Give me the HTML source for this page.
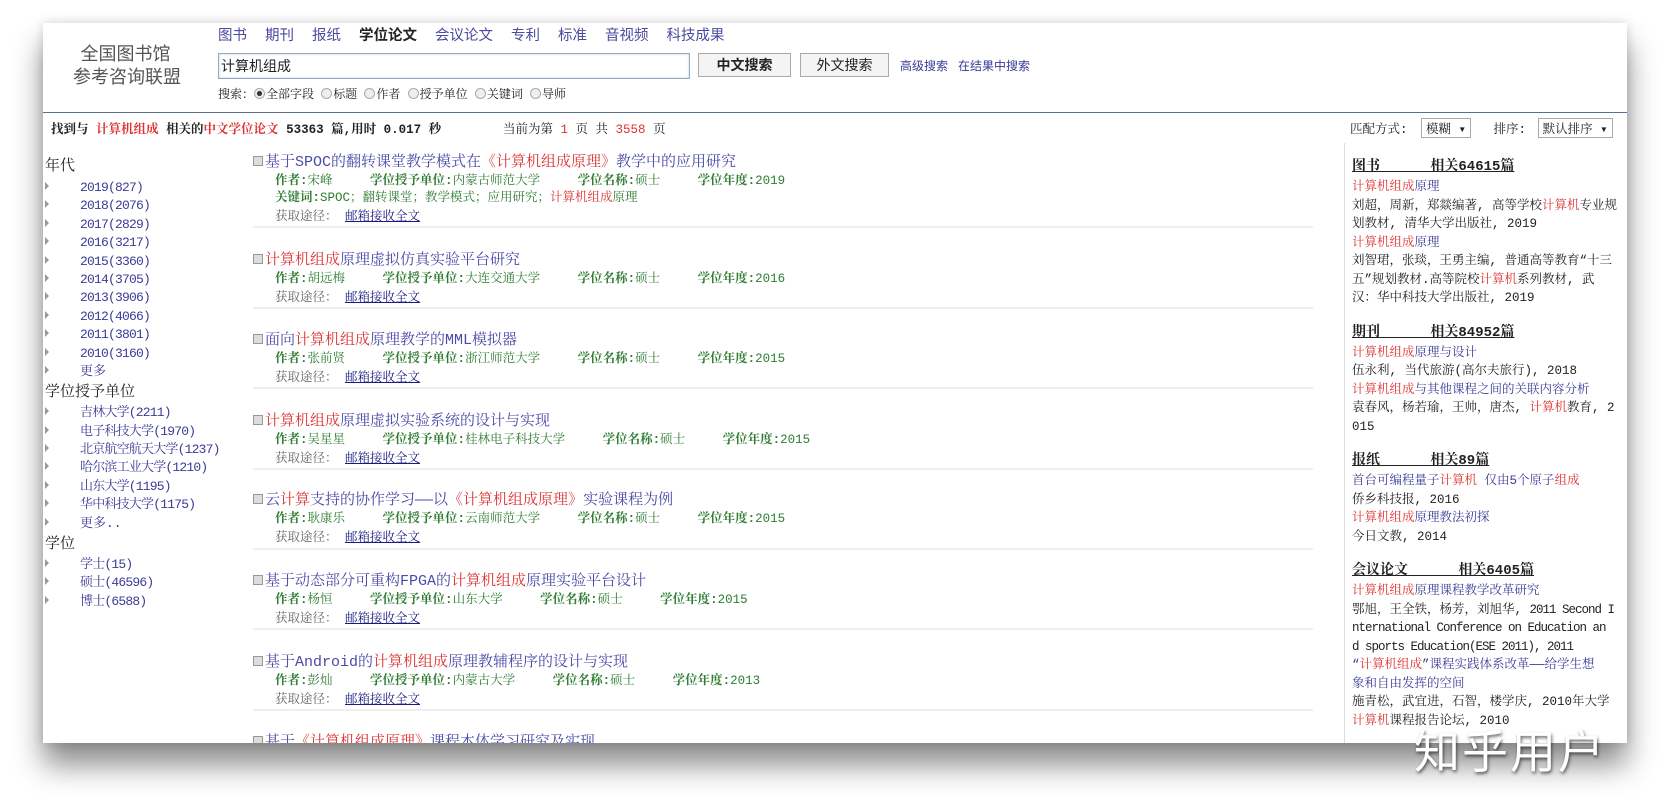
<!DOCTYPE html>
<html><head><meta charset="utf-8">
<style>
*{margin:0;padding:0;box-sizing:border-box}
body{width:1670px;height:803px;background:#fff;position:relative;overflow:hidden;font-family:"Liberation Mono","Noto Serif CJK SC","Noto Sans CJK SC",monospace;font-size:13px;color:#222}
.page{position:absolute;left:43px;top:23px;width:1584px;height:720px;background:#fff;box-shadow:0 22px 28px rgba(0,0,0,.45),0 0 10px rgba(0,0,0,.15);overflow:hidden}
.a{position:absolute;white-space:nowrap}
.sans{font-family:"Liberation Sans","Noto Sans CJK SC",sans-serif}
.r{color:#d33}
.b{color:#3b3b98}
.g{color:#2e7d32}
.gl{color:#2e7d32;font-weight:bold}
.nav span{margin-right:18px;color:#4a4aa0}
.lnk{color:#1a1a80;text-decoration:underline}
.tri{display:inline-block;width:0;height:0;border-left:4px solid #999;border-top:4px solid transparent;border-bottom:4px solid transparent;margin-right:31px;vertical-align:1px}
.lc div{height:18.4px;line-height:18.4px;color:#3b3b98}
.lc .n{letter-spacing:-0.8px}
.cb{display:inline-block;width:10px;height:10px;border:1px solid #999;background:#ddd;margin-right:2px;vertical-align:0}
.res{position:absolute;left:210px;white-space:nowrap}
.res .t{font-size:15px;line-height:19px;color:#4a4aa8}
.res .m{padding-left:22px;line-height:19px;font-size:12.5px}
.sep{position:absolute;left:210px;width:1060px;height:2px;background:#eee}
.rc div{height:18.5px;line-height:18.5px;white-space:nowrap}
.rc .l{letter-spacing:-1px}
.rh{font-weight:bold;text-decoration:underline;font-size:14px;color:#222}
.rad{display:inline-block;width:11px;height:11px;border-radius:50%;border:1px solid #aaa;background:#eee;vertical-align:-1px;margin-right:1px}
</style></head><body>
<div class="page">
<div class="a sans" style="left:30px;top:20px;width:105px;text-align:center;font-size:18px;line-height:23px;color:#555">全国图书馆<br>参考咨询联盟</div>
<div class="a sans nav" style="left:175px;top:1px;font-size:14.5px"><span>图书</span><span>期刊</span><span>报纸</span><span style="color:#222;font-weight:bold">学位论文</span><span>会议论文</span><span>专利</span><span>标准</span><span>音视频</span><span>科技成果</span></div>
<div class="a sans" style="left:175px;top:30px;width:472px;height:26px;border:1px solid #9ab;box-shadow:inset 0 0 2px #bcd;font-size:14px;line-height:24px;padding-left:2px">计算机组成</div>
<div class="a sans" style="left:655px;top:30px;width:93px;height:24px;border:1px solid #aaa;background:#f4f4f4;font-weight:bold;font-size:14px;text-align:center;line-height:22px">中文搜索</div>
<div class="a sans" style="left:757px;top:30px;width:89px;height:24px;border:1px solid #aaa;background:#f4f4f4;font-size:14px;text-align:center;line-height:22px">外文搜索</div>
<div class="a sans" style="left:857px;top:34px;font-size:12px;color:#3b3b98">高级搜索&nbsp;&nbsp;&nbsp;在结果中搜索</div>
<div class="a" style="left:175px;top:62px;font-size:12px">搜索：<span class="rad" style="background:radial-gradient(#333 35%,#eee 45%)"></span>全部字段 <span class="rad"></span>标题 <span class="rad"></span>作者 <span class="rad"></span>授予单位 <span class="rad"></span>关键词 <span class="rad"></span>导师</div>
<div class="a" style="left:0;top:89px;width:1584px;height:1px;background:#5a7090"></div>
<div class="a" style="left:8px;top:96px;font-weight:bold;font-size:12.5px">找到与 <span class="r">计算机组成</span> 相关的<span class="r">中文学位论文</span> 53363 篇,用时 0.017 秒</div>
<div class="a" style="left:460px;top:96px;font-size:12.5px">当前为第 <span class="r">1</span> 页 共 <span class="r">3558</span> 页</div>
<div class="a" style="left:1307px;top:95px;font-size:12.5px">匹配方式: <span style="display:inline-block;border:1px solid #aaa;padding:0 4px;margin-left:6px">模糊 ▾</span>&nbsp;&nbsp; 排序: <span style="display:inline-block;border:1px solid #aaa;padding:0 4px;margin-left:4px">默认排序 ▾</span></div>

<div class="a lc" style="left:2px;top:135px">
<div style="font-size:15px;color:#222;height:21px">年代</div>
<div class="n"><span class="tri"></span>2019(827)</div><div class="n"><span class="tri"></span>2018(2076)</div><div class="n"><span class="tri"></span>2017(2829)</div><div class="n"><span class="tri"></span>2016(3217)</div><div class="n"><span class="tri"></span>2015(3360)</div><div class="n"><span class="tri"></span>2014(3705)</div><div class="n"><span class="tri"></span>2013(3906)</div><div class="n"><span class="tri"></span>2012(4066)</div><div class="n"><span class="tri"></span>2011(3801)</div><div class="n"><span class="tri"></span>2010(3160)</div><div><span class="tri"></span>更多</div>
<div style="font-size:15px;color:#222;height:23px;line-height:23px">学位授予单位</div>
<div class="n"><span class="tri"></span>吉林大学(2211)</div><div class="n"><span class="tri"></span>电子科技大学(1970)</div><div class="n"><span class="tri"></span>北京航空航天大学(1237)</div><div class="n"><span class="tri"></span>哈尔滨工业大学(1210)</div><div class="n"><span class="tri"></span>山东大学(1195)</div><div class="n"><span class="tri"></span>华中科技大学(1175)</div><div><span class="tri"></span>更多..</div>
<div style="font-size:15px;color:#222;height:23px;line-height:23px">学位</div>
<div class="n"><span class="tri"></span>学士(15)</div><div class="n"><span class="tri"></span>硕士(46596)</div><div class="n"><span class="tri"></span>博士(6588)</div>
</div>

<div class="res" style="top:130px"><div class="t"><span class="cb"></span>基于SPOC的翻转课堂教学模式在<span class="r">《计算机组成原理》</span>教学中的应用研究</div>
<div class="m"><span class="gl">作者:</span><span class="g">宋峰</span>&nbsp;&nbsp;&nbsp;&nbsp; <span class="gl">学位授予单位:</span><span class="g">内蒙古师范大学</span>&nbsp;&nbsp;&nbsp;&nbsp; <span class="gl">学位名称:</span><span class="g">硕士</span>&nbsp;&nbsp;&nbsp;&nbsp; <span class="gl">学位年度:</span><span class="g">2019</span></div>
<div class="m" style="margin-top:-2px"><span class="gl">关键词:</span><span class="g">SPOC；翻转课堂；教学模式；应用研究；</span><span class="r">计算机组成</span><span class="g">原理</span></div>
<div class="m" style="color:#666">获取途径： <span class="lnk">邮箱接收全文</span></div></div>
<div class="sep" style="top:203px"></div>

<div class="res" style="top:228px"><div class="t"><span class="cb"></span><span class="r">计算机组成</span>原理虚拟仿真实验平台研究</div>
<div class="m"><span class="gl">作者:</span><span class="g">胡远梅</span>&nbsp;&nbsp;&nbsp;&nbsp; <span class="gl">学位授予单位:</span><span class="g">大连交通大学</span>&nbsp;&nbsp;&nbsp;&nbsp; <span class="gl">学位名称:</span><span class="g">硕士</span>&nbsp;&nbsp;&nbsp;&nbsp; <span class="gl">学位年度:</span><span class="g">2016</span></div>
<div class="m" style="color:#666">获取途径： <span class="lnk">邮箱接收全文</span></div></div>
<div class="sep" style="top:284px"></div>

<div class="res" style="top:308px"><div class="t"><span class="cb"></span>面向<span class="r">计算机组成</span>原理教学的MML模拟器</div>
<div class="m"><span class="gl">作者:</span><span class="g">张前贤</span>&nbsp;&nbsp;&nbsp;&nbsp; <span class="gl">学位授予单位:</span><span class="g">浙江师范大学</span>&nbsp;&nbsp;&nbsp;&nbsp; <span class="gl">学位名称:</span><span class="g">硕士</span>&nbsp;&nbsp;&nbsp;&nbsp; <span class="gl">学位年度:</span><span class="g">2015</span></div>
<div class="m" style="color:#666">获取途径： <span class="lnk">邮箱接收全文</span></div></div>
<div class="sep" style="top:364px"></div>

<div class="res" style="top:389px"><div class="t"><span class="cb"></span><span class="r">计算机组成</span>原理虚拟实验系统的设计与实现</div>
<div class="m"><span class="gl">作者:</span><span class="g">吴星星</span>&nbsp;&nbsp;&nbsp;&nbsp; <span class="gl">学位授予单位:</span><span class="g">桂林电子科技大学</span>&nbsp;&nbsp;&nbsp;&nbsp; <span class="gl">学位名称:</span><span class="g">硕士</span>&nbsp;&nbsp;&nbsp;&nbsp; <span class="gl">学位年度:</span><span class="g">2015</span></div>
<div class="m" style="color:#666">获取途径： <span class="lnk">邮箱接收全文</span></div></div>
<div class="sep" style="top:445px"></div>

<div class="res" style="top:468px"><div class="t"><span class="cb"></span>云<span class="r">计算</span>支持的协作学习——以<span class="r">《计算机组成原理》</span>实验课程为例</div>
<div class="m"><span class="gl">作者:</span><span class="g">耿康乐</span>&nbsp;&nbsp;&nbsp;&nbsp; <span class="gl">学位授予单位:</span><span class="g">云南师范大学</span>&nbsp;&nbsp;&nbsp;&nbsp; <span class="gl">学位名称:</span><span class="g">硕士</span>&nbsp;&nbsp;&nbsp;&nbsp; <span class="gl">学位年度:</span><span class="g">2015</span></div>
<div class="m" style="color:#666">获取途径： <span class="lnk">邮箱接收全文</span></div></div>
<div class="sep" style="top:525px"></div>

<div class="res" style="top:549px"><div class="t"><span class="cb"></span>基于动态部分可重构FPGA的<span class="r">计算机组成</span>原理实验平台设计</div>
<div class="m"><span class="gl">作者:</span><span class="g">杨恒</span>&nbsp;&nbsp;&nbsp;&nbsp; <span class="gl">学位授予单位:</span><span class="g">山东大学</span>&nbsp;&nbsp;&nbsp;&nbsp; <span class="gl">学位名称:</span><span class="g">硕士</span>&nbsp;&nbsp;&nbsp;&nbsp; <span class="gl">学位年度:</span><span class="g">2015</span></div>
<div class="m" style="color:#666">获取途径： <span class="lnk">邮箱接收全文</span></div></div>
<div class="sep" style="top:605px"></div>

<div class="res" style="top:630px"><div class="t"><span class="cb"></span>基于Android的<span class="r">计算机组成</span>原理教辅程序的设计与实现</div>
<div class="m"><span class="gl">作者:</span><span class="g">彭灿</span>&nbsp;&nbsp;&nbsp;&nbsp; <span class="gl">学位授予单位:</span><span class="g">内蒙古大学</span>&nbsp;&nbsp;&nbsp;&nbsp; <span class="gl">学位名称:</span><span class="g">硕士</span>&nbsp;&nbsp;&nbsp;&nbsp; <span class="gl">学位年度:</span><span class="g">2013</span></div>
<div class="m" style="color:#666">获取途径： <span class="lnk">邮箱接收全文</span></div></div>
<div class="sep" style="top:686px"></div>

<div class="res" style="top:710px"><div class="t"><span class="cb"></span>基于<span class="r">《计算机组成原理》</span>课程本体学习研究及实现</div></div>

<div class="a" style="left:1301px;top:120px;width:1px;height:600px;background:#ddd"></div>
<div class="a rc" style="left:1309px;top:135px;font-size:12.5px">
<div class="rh" style="height:20px">图书&nbsp;&nbsp;&nbsp;&nbsp;&nbsp; 相关64615篇</div>
<div><span class="r">计算机组成</span><span class="b">原理</span></div>
<div>刘超，周新，郑燚编著, 高等学校<span class="r">计算机</span>专业规</div>
<div>划教材, 清华大学出版社, 2019</div>
<div><span class="r">计算机组成</span><span class="b">原理</span></div>
<div>刘智珺，张琰，王勇主编, 普通高等教育“十三</div>
<div>五”规划教材.高等院校<span class="r">计算机</span>系列教材, 武</div>
<div>汉：华中科技大学出版社, 2019</div>
<div style="height:16px"></div>
<div class="rh" style="height:20px">期刊&nbsp;&nbsp;&nbsp;&nbsp;&nbsp; 相关84952篇</div>
<div><span class="r">计算机组成</span><span class="b">原理与设计</span></div>
<div>伍永利, 当代旅游(高尔夫旅行), 2018</div>
<div><span class="r">计算机组成</span><span class="b">与其他课程之间的关联内容分析</span></div>
<div>袁春风，杨若瑜，王帅，唐杰, <span class="r">计算机</span>教育, 2</div>
<div>015</div>
<div style="height:16px"></div>
<div class="rh" style="height:20px">报纸&nbsp;&nbsp;&nbsp;&nbsp;&nbsp; 相关89篇</div>
<div><span class="b">首台可编程量子</span><span class="r">计算机</span> <span class="b">仅由5个原子</span><span class="r">组成</span></div>
<div>侨乡科技报, 2016</div>
<div><span class="r">计算机组成</span><span class="b">原理教法初探</span></div>
<div>今日文教, 2014</div>
<div style="height:16px"></div>
<div class="rh" style="height:20px">会议论文&nbsp;&nbsp;&nbsp;&nbsp;&nbsp; 相关6405篇</div>
<div><span class="r">计算机组成</span><span class="b">原理课程教学改革研究</span></div>
<div>鄂旭，王全铁，杨芳，刘旭华, <span class="l">2011 Second I</span></div>
<div class="l">nternational Conference on Education an</div>
<div class="l">d sports Education(ESE 2011), 2011</div>
<div><span class="b">“</span><span class="r">计算机组成</span><span class="b">”课程实践体系改革——给学生想</span></div>
<div><span class="b">象和自由发挥的空间</span></div>
<div>施青松，武宜进，石智，楼学庆, 2010年大学</div>
<div><span class="r">计算机</span>课程报告论坛, 2010</div>
</div>
</div>
<div class="a sans" style="left:1414px;top:716px;font-size:46px;color:#fff;text-shadow:1px 2px 3px rgba(0,0,0,.6);letter-spacing:2px">知乎用户</div>
</body></html>
